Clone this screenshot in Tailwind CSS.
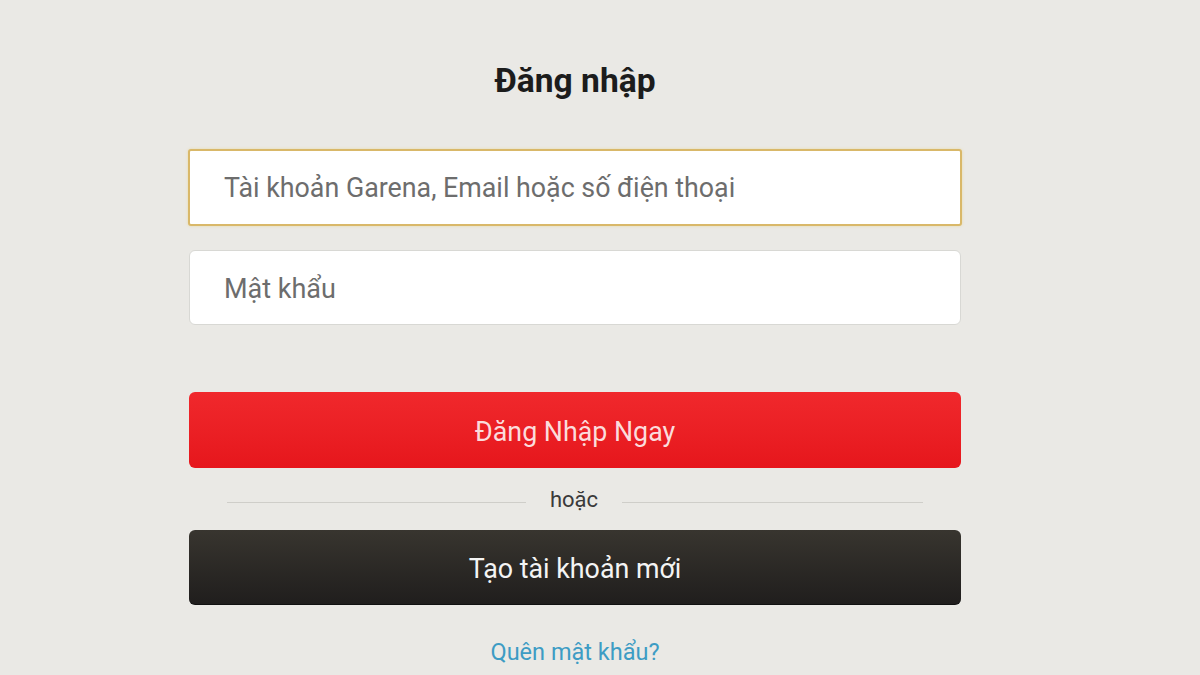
<!DOCTYPE html>
<html lang="vi">
<head>
  <meta charset="UTF-8">
  <title>Đăng nhập</title>
  <script src="https://cdn.jsdelivr.net/npm/@tailwindcss/browser@4"></script>
</head>
<body class="bg-[#eae9e5] font-['Roboto','Noto_Sans',sans-serif] h-[675px] overflow-hidden">
  <div class="w-[774px] ml-[188px]">
    <h1 class="pt-[62px] h-[149px] text-center text-[33.6px] leading-[38px] font-bold text-[#1c1c1c]">Đăng nhập</h1>

    <!-- inputs -->
    <div class="h-[77px] flex items-center pl-[34px] pt-[2px] bg-white border-2 border-[#d9b869] rounded-[3px] shadow-[0_0_3px_#e8d9a8] text-[26.8px] text-[#6d6d6d]">Tài khoản Garena, Email hoặc số điện thoại</div>
    <div class="mt-[24px] mx-[1px] h-[75px] flex items-center pl-[34px] pt-[3px] bg-white border border-[#d8d8d4] rounded-[6px] text-[27px] text-[#6d6d6d]">Mật khẩu</div>

    <!-- buttons -->
    <div class="mt-[67px] mx-[1px] h-[76px] flex items-center justify-center pt-[5px] rounded-[6px] bg-gradient-to-b from-[#f0282c] to-[#e6161c] text-[26.8px] text-[#fbdcdc]">Đăng Nhập Ngay</div>
    <div class="h-[62px] flex items-center pl-[39px] pt-[6px] text-[#3a3a3a]">
      <div class="w-[299px] h-[1px] bg-[#cfcec9]"></div>
      <div class="w-[96px] text-center text-[22px] pb-[6px]">hoặc</div>
      <div class="w-[301px] h-[1px] bg-[#cfcec9]"></div>
    </div>
    <div class="mx-[1px] h-[75px] flex items-center justify-center pt-[4px] rounded-[6px] bg-gradient-to-b from-[#38352f] to-[#201e1d] border-b border-[#111] text-[26.8px] text-[#f4f4f4]">Tạo tài khoản mới</div>

    <div class="mt-[29px] text-center text-[23.5px] leading-[36px] text-[#3d9cc4]">Quên mật khẩu?</div>
  </div>
</body>
</html>
